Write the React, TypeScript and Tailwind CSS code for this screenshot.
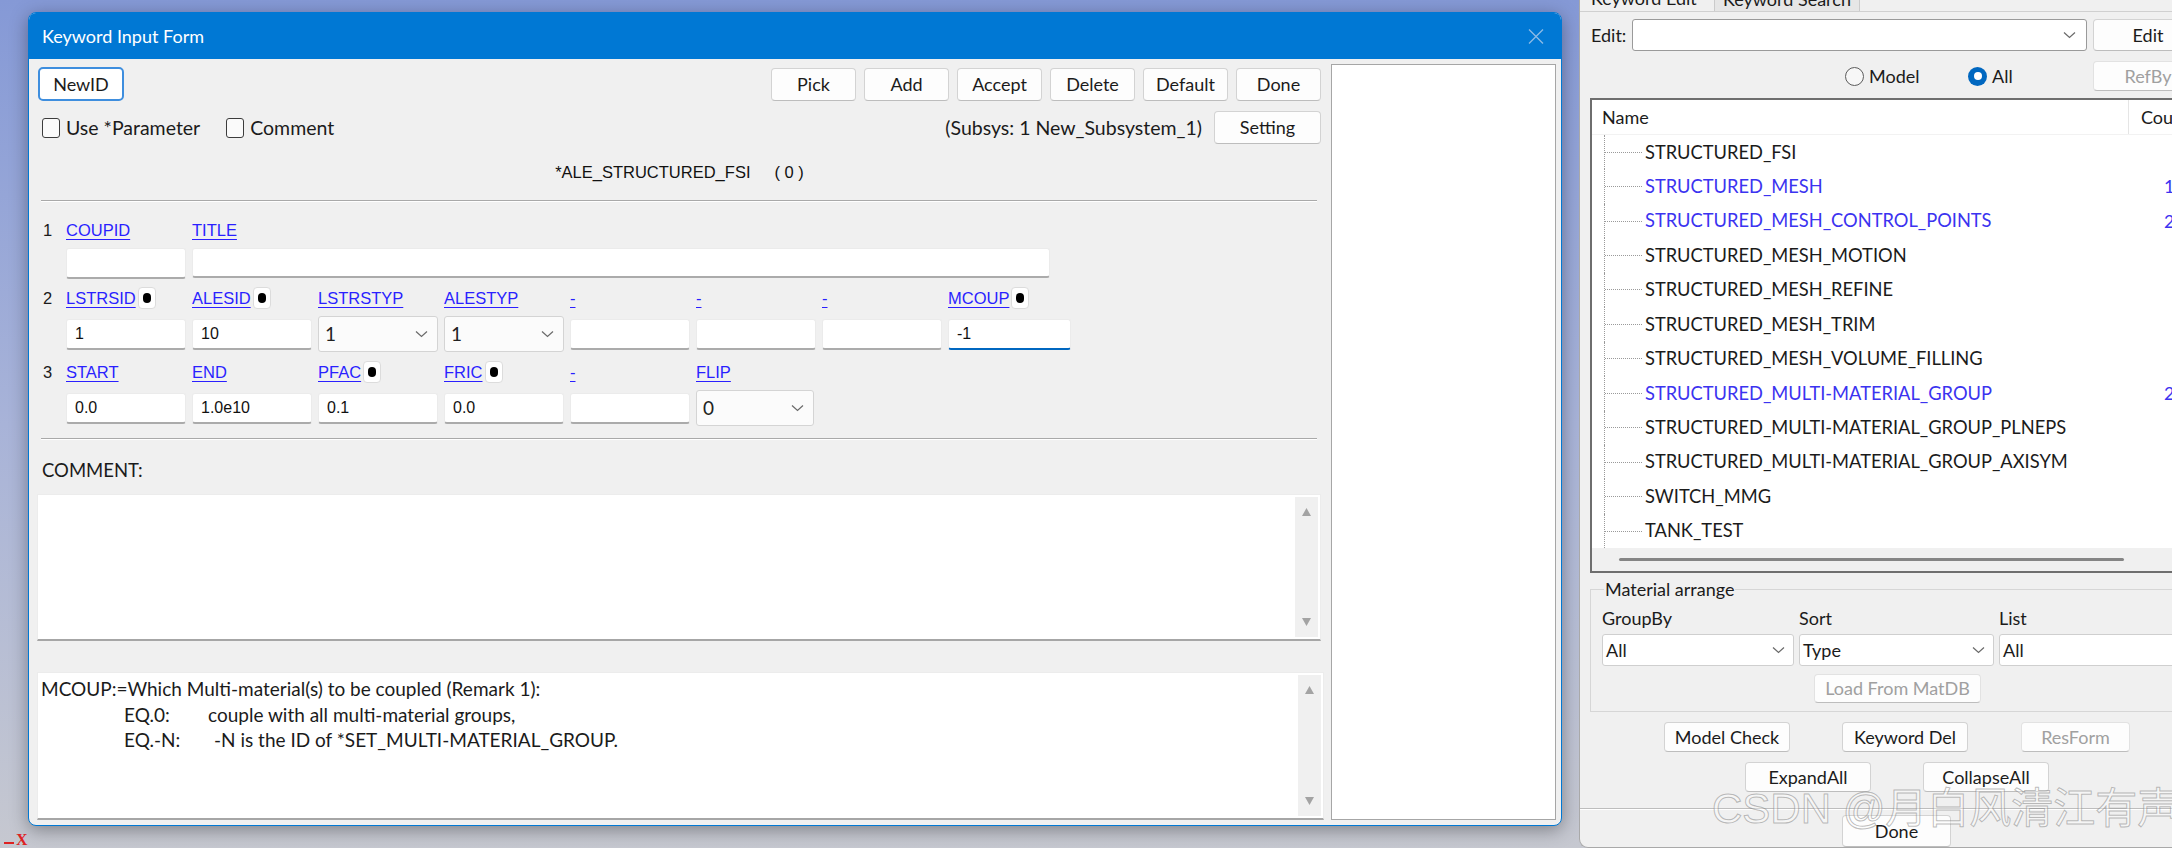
import React from 'react'

const ui = "font-['Lato','Noto_Sans',sans-serif]"
const ms = "font-['Liberation_Sans',Arial,sans-serif]"

const Chevron = () => (
  <svg width="13" height="8" viewBox="0 0 13 8">
    <path d="M1 1.5 L6.5 6.5 L12 1.5" fill="none" stroke="#6a6a6a" strokeWidth="1.2" />
  </svg>
)

const Tri = ({ down }: { down?: boolean }) => (
  <svg width="11" height="10" viewBox="0 0 11 10">
    <path d={down ? 'M1 1 L10 1 L5.5 9 Z' : 'M1 9 L10 9 L5.5 1 Z'} fill="#a3a3a3" />
  </svg>
)

const Btn = ({
  children,
  className = '',
  disabled,
}: {
  children: React.ReactNode
  className?: string
  disabled?: boolean
}) => (
  <div
    className={`flex items-center justify-center rounded-[4px] border border-[#d3d3d3] border-b-[#bdbdbd] bg-[#fdfdfd] text-[18px] ${
      disabled ? 'text-[#a0a0a0] bg-[#f5f5f5] border-[#e2e2e2]' : 'text-[#1b1b1b]'
    } ${className}`}
  >
    {children}
  </div>
)

const Link = ({ children }: { children: React.ReactNode }) => (
  <span className="text-[#2a1fff] underline underline-offset-[3px] decoration-1">{children}</span>
)

const Dot = () => (
  <span className="inline-flex w-[18px] h-[22px] items-center justify-center rounded-[4px] border border-[#dcdcdc] bg-white">
    <span className="w-[8px] h-[10px] rounded-full bg-black" />
  </span>
)

const Label = ({ name, dot }: { name: string; dot?: boolean }) => (
  <div className="w-[126px] flex items-center gap-[2px]">
    <Link>{name}</Link>
    {dot && <Dot />}
  </div>
)

const Field = ({ value = '', focus, w = 'w-[120px]' }: { value?: string; focus?: boolean; w?: string }) => (
  <div className="w-[126px] flex items-center">
    <div
      className={`${w} h-[31px] flex items-center pl-[8px] bg-white rounded-[3px] border border-[#ebebeb] border-b-2 ${
        focus ? 'border-b-[#0067c0]' : 'border-b-[#ababab]'
      } text-[16px] text-[#111]`}
    >
      {value}
    </div>
  </div>
)

const Select = ({ value, w = 'w-[120px]', h = 'h-[36px]' }: { value: string; w?: string; h?: string }) => (
  <div className="w-[126px] flex items-center">
    <div
      className={`${w} ${h} flex items-center justify-between pl-[6px] pr-[9px] bg-[#fbfbfb] rounded-[3px] border border-[#d4d4d4] ${ui} text-[19px] text-[#222]`}
    >
      <span>{value}</span>
      <Chevron />
    </div>
  </div>
)

const Check = ({ label }: { label: string }) => (
  <div className="flex items-center gap-[6px]">
    <span className="w-[18px] h-[20px] rounded-[3px] border border-[#3c3c3c] bg-[#fafafa]" />
    <span className="text-[19.5px] text-[#1b1b1b]">{label}</span>
  </div>
)

const TextBox = ({ className = '', children }: { className?: string; children?: React.ReactNode }) => (
  <div className={`flex bg-white border border-[#ececec] border-b-2 border-b-[#a6a6a6] ${className}`}>
    <div className="flex-1 pl-[3px] pt-[3px]">{children}</div>
    <div className="w-[23px] my-[2px] mr-[2px] bg-[#f0f0f0] flex flex-col items-center justify-between py-[10px]">
      <Tri />
      <Tri down />
    </div>
  </div>
)

const KeywordForm = () => (
  <div className={`absolute left-[28px] top-[12px] w-[1534px] h-[814px] flex flex-col overflow-hidden rounded-[8px] border border-[#0078d4] bg-[#f0f0f0] shadow-[0_4px_18px_rgba(0,0,0,0.35)] ${ui}`}>
    <div className="h-[46px] shrink-0 bg-[#0078d4] flex items-center justify-between pl-[13px] pr-[17px]">
      <span className="text-white text-[18px]">Keyword Input Form</span>
      <svg width="16" height="15" viewBox="0 0 16 15">
        <path d="M1 0.5 L15 14.5 M15 0.5 L1 14.5" stroke="#8dbbe6" strokeWidth="1.3" />
      </svg>
    </div>
    <div className="flex flex-1 min-h-0 pl-[9px] pr-[5px] pt-[5px] pb-[5px] gap-[10px]">
      <div className="w-[1283px] shrink-0 flex flex-col pt-[3px]">
        <div className="flex items-center justify-between h-[34px]">
          <div className="w-[86px] h-[34px] flex items-center justify-center rounded-[5px] border-2 border-[#3e8ede] bg-white text-[18px] text-[#1b1b1b]">
            NewID
          </div>
          <div className="flex gap-[8px]">
            {['Pick', 'Add', 'Accept', 'Delete', 'Default', 'Done'].map((b) => (
              <Btn key={b} className="w-[85px] h-[33px]">
                {b}
              </Btn>
            ))}
          </div>
        </div>

        <div className="flex items-center justify-between h-[33px] mt-[10px]">
          <div className="flex items-center pl-[4px] gap-[26px]">
            <Check label="Use *Parameter" />
            <Check label="Comment" />
          </div>
          <div className="flex items-center gap-[12px]">
            <span className="text-[19.5px] text-[#1b1b1b]">(Subsys: 1 New_Subsystem_1)</span>
            <Btn className="w-[107px] h-[33px]">Setting</Btn>
          </div>
        </div>

        <div className={`flex items-center justify-center gap-[24px] h-[22px] mt-[17px] ${ms} text-[16.5px] text-[#111]`}>
          <span>*ALE_STRUCTURED_FSI</span>
          <span className="whitespace-pre">( 0 )</span>
        </div>

        <div className="ml-[3px] mr-[4px] mt-[17px] h-[2px] border-t border-[#a9a9a9] border-b border-b-white" />

        <div className={`flex flex-col ${ms} text-[16.5px] text-[#1b1b1b]`}>
          <div className="flex items-center h-[22px] mt-[17px]">
            <span className="w-[28px] pl-[5px]">1</span>
            <Label name="COUPID" />
            <Label name="TITLE" />
          </div>
          <div className="flex items-center h-[36px] mt-[4px] pl-[28px]">
            <Field />
            <div className="w-[858px] h-[30px] bg-white rounded-[3px] border border-[#ebebeb] border-b-2 border-b-[#ababab]" />
          </div>

          <div className="flex items-center h-[22px] mt-[6px]">
            <span className="w-[28px] pl-[5px]">2</span>
            <Label name="LSTRSID" dot />
            <Label name="ALESID" dot />
            <Label name="LSTRSTYP" />
            <Label name="ALESTYP" />
            <Label name="-" />
            <Label name="-" />
            <Label name="-" />
            <Label name="MCOUP" dot />
          </div>
          <div className="flex items-center h-[36px] mt-[7px] pl-[28px]">
            <Field value="1" />
            <Field value="10" />
            <Select value="1" />
            <Select value="1" />
            <Field />
            <Field />
            <Field />
            <Field value="-1" focus w="w-[123px]" />
          </div>

          <div className="flex items-center h-[22px] mt-[9px]">
            <span className="w-[28px] pl-[5px]">3</span>
            <Label name="START" />
            <Label name="END" />
            <Label name="PFAC" dot />
            <Label name="FRIC" dot />
            <Label name="-" />
            <Label name="FLIP" />
          </div>
          <div className="flex items-center h-[36px] mt-[7px] pl-[28px]">
            <Field value="0.0" />
            <Field value="1.0e10" />
            <Field value="0.1" />
            <Field value="0.0" />
            <Field />
            <Select value="0" w="w-[118px]" />
          </div>
        </div>

        <div className="ml-[3px] mr-[4px] mt-[12px] h-[2px] border-t border-[#a9a9a9] border-b border-b-white" />

        <div className="h-[22px] mt-[20px] pl-[4px] flex items-center text-[18.5px] text-[#1b1b1b]">COMMENT:</div>

        <TextBox className="-ml-[1px] w-[1284px] h-[148px] mt-[12px]" />

        <TextBox className="-ml-[1px] w-[1287px] h-[149px] mt-[31px]">
          <div className="text-[19px] leading-[25.5px] text-[#1b1b1b]">
            <div>MCOUP:=Which Multi-material(s) to be coupled (Remark 1):</div>
            <div className="flex">
              <span className="ml-[83px] w-[84px] shrink-0">EQ.0:</span>
              <span>couple with all multi-material groups,</span>
            </div>
            <div className="flex">
              <span className="ml-[83px] w-[90px] shrink-0">EQ.-N:</span>
              <span>-N is the ID of *SET_MULTI-MATERIAL_GROUP.</span>
            </div>
          </div>
        </TextBox>
      </div>
      <div className="flex-1 bg-white border border-[#a6a6a6]" />
    </div>
  </div>
)

const tree = [
  { n: 'STRUCTURED_FSI' },
  { n: 'STRUCTURED_MESH', c: '1' },
  { n: 'STRUCTURED_MESH_CONTROL_POINTS', c: '2' },
  { n: 'STRUCTURED_MESH_MOTION' },
  { n: 'STRUCTURED_MESH_REFINE' },
  { n: 'STRUCTURED_MESH_TRIM' },
  { n: 'STRUCTURED_MESH_VOLUME_FILLING' },
  { n: 'STRUCTURED_MULTI-MATERIAL_GROUP', c: '2' },
  { n: 'STRUCTURED_MULTI-MATERIAL_GROUP_PLNEPS' },
  { n: 'STRUCTURED_MULTI-MATERIAL_GROUP_AXISYM' },
  { n: 'SWITCH_MMG' },
  { n: 'TANK_TEST' },
]

const PSelect = ({ value, w }: { value: string; w: string }) => (
  <div className={`${w} h-[32px] flex items-center justify-between pl-[3px] pr-[8px] bg-white rounded-[3px] border border-[#cfcfcf] text-[18px] text-[#1b1b1b]`}>
    <span>{value}</span>
    <Chevron />
  </div>
)

const KeywordPanel = () => (
  <div className={`absolute left-[1579px] top-[-14px] w-[640px] h-[862px] flex flex-col rounded-bl-[9px] border-l border-b border-[#a9a9a9] bg-[#f0f0f0] ${ui} text-[#1b1b1b]`}>
    <div className="h-[26px] flex items-end border-b border-[#d0d0d0]">
      <div className="w-[134px] h-full flex items-center pl-[11px] text-[18px] bg-[#f0f0f0]">Keyword Edit</div>
      <div className="w-[146px] h-[24px] flex items-center justify-center text-[18px] bg-[#e6e6e6] border border-[#cbcbcb] border-b-0">
        Keyword Search
      </div>
    </div>

    <div className="flex items-center h-[32px] mt-[7px] pl-[11px]">
      <span className="w-[41px] text-[18px]">Edit:</span>
      <div className="w-[455px] h-[32px] flex items-center justify-end pr-[10px] bg-white rounded-[3px] border border-[#9a9a9a]">
        <Chevron />
      </div>
      <Btn className="ml-[6px] w-[110px] h-[32px]">Edit</Btn>
    </div>

    <div className="flex items-center h-[30px] mt-[10px] pl-[265px]">
      <div className="w-[123px] flex items-center gap-[5px]">
        <span className="w-[19px] h-[19px] rounded-full border border-[#5c5c5c] bg-[#f7f7f7]" />
        <span className="text-[18px]">Model</span>
      </div>
      <div className="w-[125px] flex items-center gap-[5px]">
        <span className="w-[19px] h-[19px] rounded-full bg-[#0067c0] flex items-center justify-center">
          <span className="w-[8px] h-[8px] rounded-full bg-white" />
        </span>
        <span className="text-[18px]">All</span>
      </div>
      <Btn disabled className="w-[110px] h-[30px]">
        RefBy
      </Btn>
    </div>

    <div className="ml-[10px] mt-[7px] w-[620px] h-[475px] flex flex-col border-2 border-r-0 border-[#6e6e6e] bg-white">
      <div className="h-[35px] shrink-0 flex items-center border-b border-[#f2f2f2] text-[18px]">
        <span className="w-[536px] pl-[10px]">Name</span>
        <span className="h-full w-px bg-[#e5e5e5]" />
        <span className="pl-[12px]">Count</span>
      </div>
      <div className="flex flex-col">
        {tree.map((r) => (
          <div key={r.n} className="flex items-stretch h-[34.45px]">
            <div className="ml-[12px] w-[38px] flex items-center border-l border-dotted border-[#9a9a9a]">
              <div className="w-full border-t border-dotted border-[#9a9a9a]" />
            </div>
            <span className={`ml-[3px] w-[517px] flex items-center text-[18.3px] ${r.c ? 'text-[#3b33f0]' : 'text-[#1b1b1b]'}`}>
              {r.n}
            </span>
            <span className="flex items-center pl-[2px] text-[18px] text-[#3b33f0]">{r.c}</span>
          </div>
        ))}
      </div>
      <div className="flex-1 bg-[#f0f0f0] flex items-center pl-[27px]">
        <div className="w-[505px] h-[3px] rounded-full bg-[#858585]" />
      </div>
    </div>

    <fieldset className="ml-[10px] mt-[5px] w-[620px] h-[134px] border border-r-0 border-[#d6d6d6] pl-[11px]">
      <legend className="ml-[2px] px-[1px] text-[18px] leading-[22px]">Material arrange</legend>
      <div className="flex mt-[7px] text-[18px] leading-[22px]">
        <span className="w-[197px]">GroupBy</span>
        <span className="w-[200px]">Sort</span>
        <span>List</span>
      </div>
      <div className="flex gap-[5px] mt-[5px]">
        <PSelect value="All" w="w-[192px]" />
        <PSelect value="Type" w="w-[195px]" />
        <PSelect value="All" w="w-[200px]" />
      </div>
      <Btn disabled className="ml-[212px] mt-[8px] w-[167px] h-[29px]">
        Load From MatDB
      </Btn>
    </fieldset>

    <div className="flex items-center h-[30px] mt-[10px] pl-[84px]">
      <Btn className="w-[126px] h-[30px]">Model Check</Btn>
      <Btn className="ml-[52px] w-[126px] h-[30px]">Keyword Del</Btn>
      <Btn disabled className="ml-[53px] w-[109px] h-[30px]">
        ResForm
      </Btn>
    </div>
    <div className="flex items-center h-[30px] mt-[10px] pl-[165px]">
      <Btn className="w-[126px] h-[30px]">ExpandAll</Btn>
      <Btn className="ml-[52px] w-[126px] h-[30px]">CollapseAll</Btn>
    </div>

    <div className="mt-[16px] h-[2px] border-t border-[#bdbdbd] border-b border-b-white" />
    <Btn className="ml-[262px] mt-[5px] w-[109px] h-[32px]">Done</Btn>
  </div>
)

export default function App() {
  return (
    <div className="relative w-[2172px] h-[848px] overflow-hidden bg-linear-to-b from-[#8599d6] via-[#a8b3d8] to-[#c6c8d0]">
      <KeywordForm />
      <KeywordPanel />
      <div className="absolute left-[1712px] top-[784px] whitespace-nowrap text-[42px] leading-[50px] text-white/40 [-webkit-text-stroke:1px_rgba(110,110,110,0.45)] font-['Liberation_Sans','Noto_Sans_CJK_SC',sans-serif]">
        CSDN @月白风清江有声
      </div>
      <div className="absolute left-[4px] top-[832px] flex items-end gap-[2px]">
        <span className="w-[10px] h-[2px] mb-[4px] bg-[#d22]" />
        <span className="text-[16px] leading-[16px] font-bold text-[#d22] font-['Liberation_Serif',serif]">X</span>
      </div>
    </div>
  )
}
